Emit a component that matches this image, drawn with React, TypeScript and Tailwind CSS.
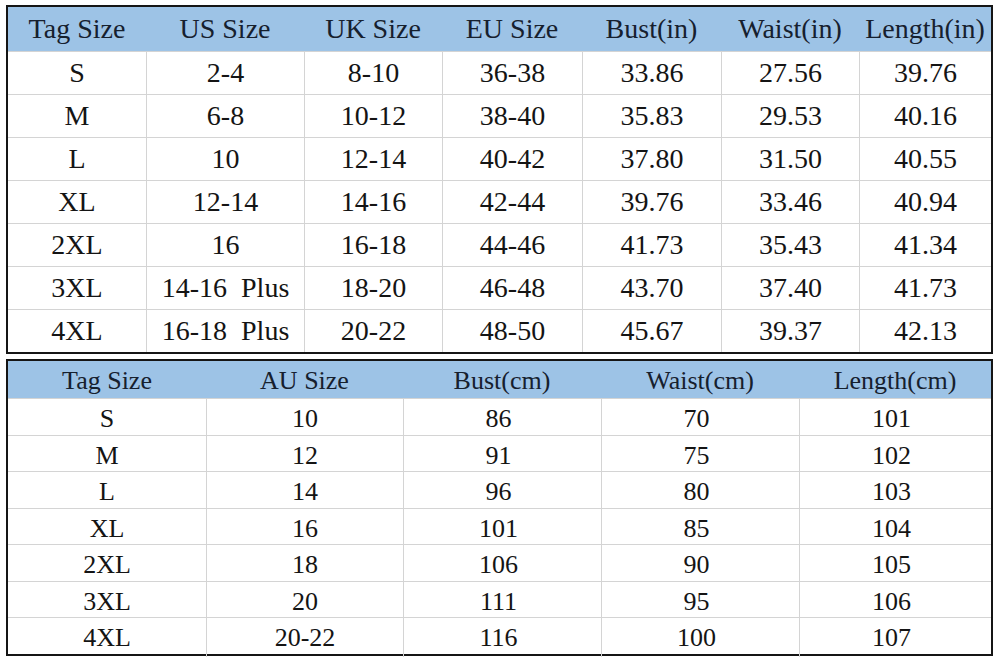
import React from "react";

const topHead = ["Tag Size", "US Size", "UK Size", "EU Size", "Bust(in)", "Waist(in)", "Length(in)"];
const topRows = [
  ["S", "2-4", "8-10", "36-38", "33.86", "27.56", "39.76"],
  ["M", "6-8", "10-12", "38-40", "35.83", "29.53", "40.16"],
  ["L", "10", "12-14", "40-42", "37.80", "31.50", "40.55"],
  ["XL", "12-14", "14-16", "42-44", "39.76", "33.46", "40.94"],
  ["2XL", "16", "16-18", "44-46", "41.73", "35.43", "41.34"],
  ["3XL", "14-16  Plus", "18-20", "46-48", "43.70", "37.40", "41.73"],
  ["4XL", "16-18  Plus", "20-22", "48-50", "45.67", "39.37", "42.13"],
];
const botHead = ["Tag Size", "AU Size", "Bust(cm)", "Waist(cm)", "Length(cm)"];
const botRows = [
  ["S", "10", "86", "70", "101"],
  ["M", "12", "91", "75", "102"],
  ["L", "14", "96", "80", "103"],
  ["XL", "16", "101", "85", "104"],
  ["2XL", "18", "106", "90", "105"],
  ["3XL", "20", "111", "95", "106"],
  ["4XL", "20-22", "116", "100", "107"],
];

const font = { fontFamily: '"Liberation Serif", "Times New Roman", serif' };

export default function App() {
  return (
    <div className="w-[1000px] h-[663px] bg-white overflow-hidden pt-[5px] pl-[6px]" style={font}>
      <div className="w-[987px] border-2 border-[#151515]">
        <div className="grid grid-cols-[138px_158px_138px_140px_139px_138px_132px] h-[44px] bg-[#9dc3e6] text-[28px] text-[#16202e]">
          {topHead.map((h, i) => (
            <div key={i} className="flex items-center justify-center whitespace-pre">
              {h}
            </div>
          ))}
        </div>
        {topRows.map((r, ri) => (
          <div key={ri} className="grid grid-cols-[138px_158px_138px_140px_139px_138px_132px] h-[43px] border-t border-[#d4d4d4] text-[28px] text-[#141414]">
            {r.map((c, i) => (
              <div key={i} className={"flex items-center justify-center whitespace-pre" + (i === 0 ? "" : " border-l border-[#d4d4d4]")}>
                {c}
              </div>
            ))}
          </div>
        ))}
      </div>
      <div className="w-[987px] mt-[5px] border-2 border-[#151515]">
        <div className="grid grid-cols-[198px_197px_198px_198px_192px] h-[37px] bg-[#9dc3e6] text-[26px] text-[#16202e]">
          {botHead.map((h, i) => (
            <div key={i} className="flex items-center justify-center">
              {h}
            </div>
          ))}
        </div>
        {botRows.map((r, ri) => (
          <div key={ri} className="grid grid-cols-[198px_197px_198px_198px_192px] h-[36.5px] border-t border-[#d4d4d4] text-[26px] text-[#141414]">
            {r.map((c, i) => (
              <div key={i} className={"flex items-center justify-center" + (i === 0 ? "" : " border-l border-[#d4d4d4]") + (i >= 2 ? " pr-[8px]" : "")}>
                {c}
              </div>
            ))}
          </div>
        ))}
      </div>
    </div>
  );
}
